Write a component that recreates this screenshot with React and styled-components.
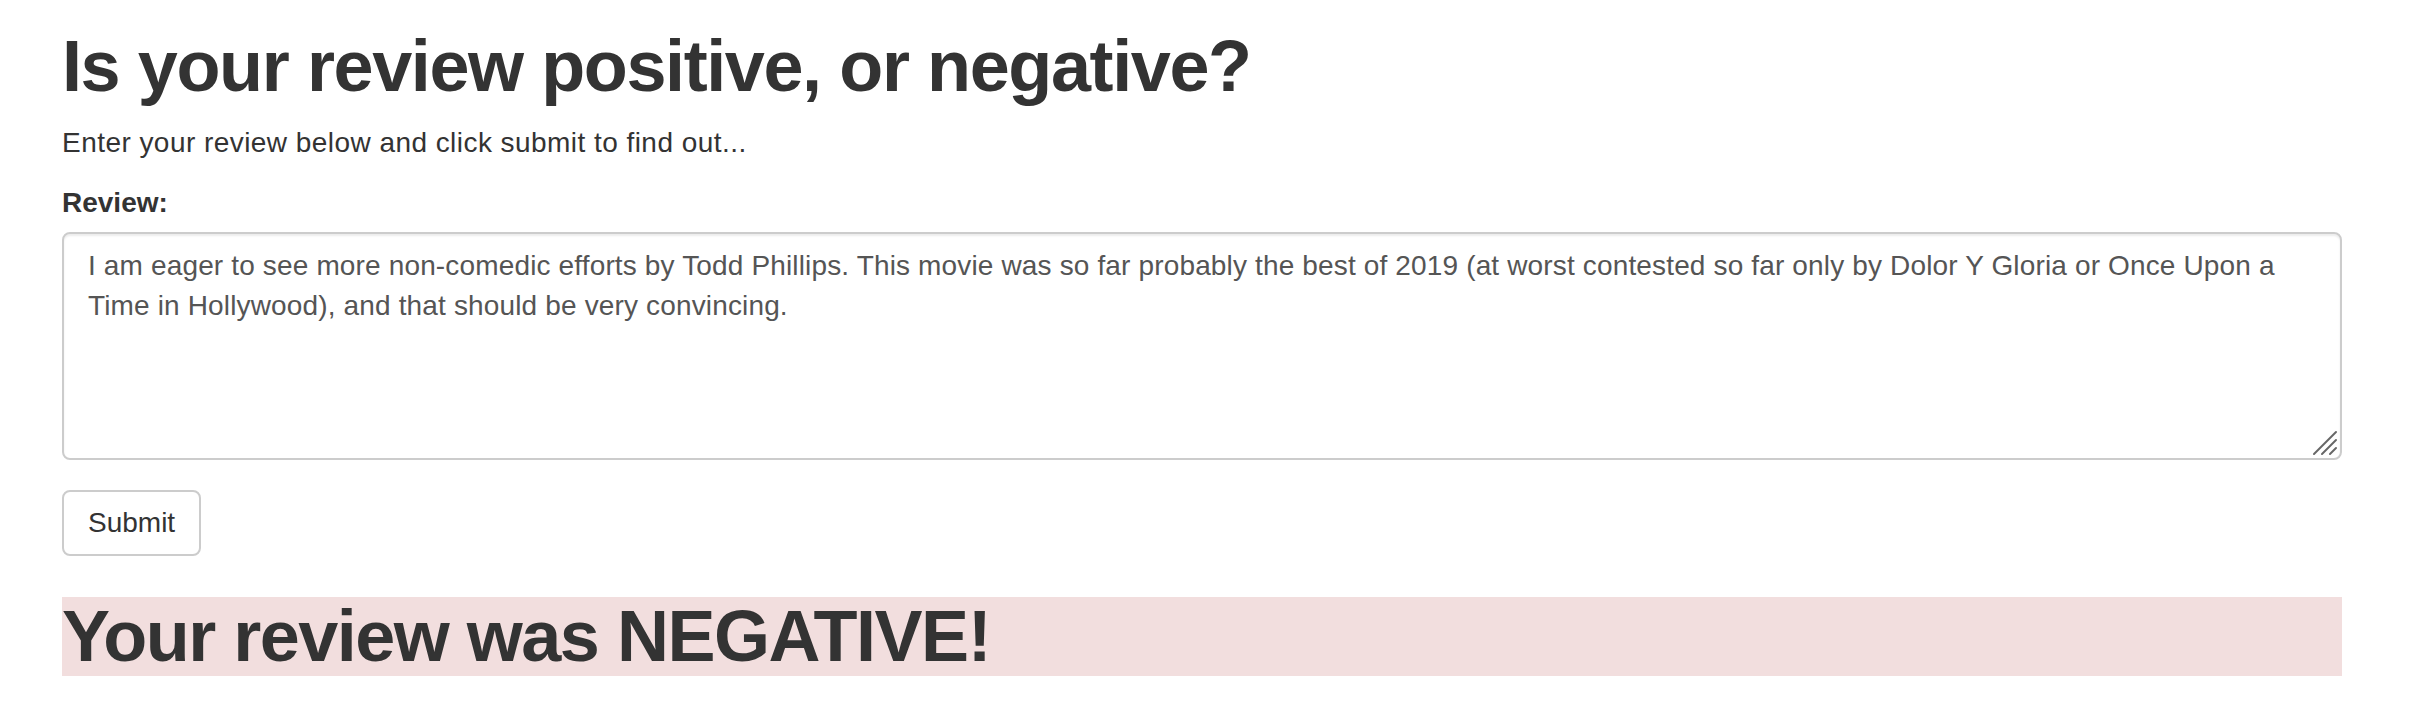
import React from "react";
import styled, { createGlobalStyle } from "styled-components";

const GlobalStyle = createGlobalStyle`
  html, body {
    margin: 0;
    padding: 0;
    background: #fff;
  }
  body {
    font-family: "Liberation Sans", Arial, sans-serif;
    font-size: 28px;
    line-height: 1.42857;
    color: #333;
  }
`;

const Page = styled.div`
  padding: 27px 80px 40px 62px;
`;

const Title = styled.h1`
  margin: 0 0 17px;
  font-size: 72px;
  font-weight: 700;
  line-height: 1.1;
  letter-spacing: -1.4px;
  color: #333;
`;

const Intro = styled.p`
  margin: 0 0 20px;
  letter-spacing: 0.45px;
`;

const Form = styled.form`
  display: flex;
  flex-direction: column;
  align-items: flex-start;
`;

const FormGroup = styled.div`
  display: flex;
  flex-direction: column;
  align-self: stretch;
  margin-bottom: 30px;
`;

const Label = styled.label`
  font-weight: 700;
  margin-bottom: 9px;
`;

const Field = styled.div`
  position: relative;
  display: flex;
`;

const TextArea = styled.textarea`
  box-sizing: border-box;
  width: 100%;
  height: 228px;
  padding: 12px 24px;
  font-family: inherit;
  font-size: 28px;
  line-height: 40px;
  letter-spacing: 0.15px;
  color: #555;
  background: #fff;
  border: 2px solid #ccc;
  border-radius: 8px;
  box-shadow: inset 0 2px 2px rgba(0, 0, 0, 0.075);
  resize: none;
  outline: none;
`;

const Grip = styled.svg`
  position: absolute;
  right: 4px;
  bottom: 4px;
  width: 26px;
  height: 26px;
  pointer-events: none;
`;

const Button = styled.button`
  box-sizing: border-box;
  height: 66px;
  padding: 0 24px;
  font-family: inherit;
  font-size: 28px;
  line-height: 40px;
  color: #333;
  background: #fff;
  border: 2px solid #ccc;
  border-radius: 8px;
  cursor: pointer;
`;

const Result = styled.h1`
  margin: 41px 0 0;
  font-size: 72px;
  font-weight: 700;
  line-height: 1.1;
  letter-spacing: -1.5px;
  color: #333;
  background: ${(p) => (p.$negative ? "#f2dede" : "#dff0d8")};
`;

const review =
  "I am eager to see more non-comedic efforts by Todd Phillips. This movie was so far probably the best of 2019 (at worst contested so far only by Dolor Y Gloria or Once Upon a Time in Hollywood), and that should be very convincing.";

export default function App() {
  return (
    <>
      <GlobalStyle />
      <Page>
        <Title>Is your review positive, or negative?</Title>
        <Intro>Enter your review below and click submit to find out...</Intro>
        <Form onSubmit={(e) => e.preventDefault()}>
          <FormGroup>
            <Label htmlFor="review">Review:</Label>
            <Field>
              <TextArea id="review" rows={5} defaultValue={review} />
              <Grip viewBox="0 0 26 26">
                <g stroke="#666" strokeWidth="2" strokeLinecap="round">
                  <line x1="2" y1="24" x2="24" y2="2" />
                  <line x1="10" y1="24" x2="24" y2="10" />
                  <line x1="18" y1="24" x2="24" y2="18" />
                </g>
              </Grip>
            </Field>
          </FormGroup>
          <Button type="submit">Submit</Button>
        </Form>
        <Result $negative>Your review was NEGATIVE!</Result>
      </Page>
    </>
  );
}
